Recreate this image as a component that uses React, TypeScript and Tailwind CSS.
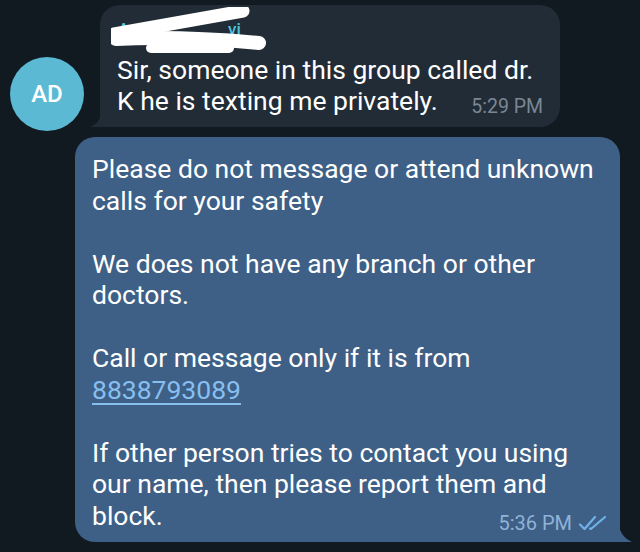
import React from "react";

const font = { fontFamily: "Roboto, 'Noto Sans', sans-serif" };

function DoubleCheck() {
  return (
    <svg width="30" height="18" viewBox="0 0 30 18" fill="none" stroke="#6fb2ea" strokeWidth="2.2" strokeLinecap="round" strokeLinejoin="round">
      <path d="M2 10.5 L6.5 15 L17 3" />
      <path d="M12 14.5 L13 15 L27 3" />
    </svg>
  );
}

export default function App() {
  return (
    <div className="relative h-[552px] w-[640px] overflow-hidden bg-[#111921] text-white" style={font}>
      <div className="flex items-end pl-[10px] pt-[5px]">
        <div className="mb-[-4px] flex h-[74px] w-[74px] items-center justify-center rounded-full bg-[#5bb9d3] text-[24px] font-medium text-white">
          AD
        </div>
        <div className="relative ml-[16px] w-[460px] rounded-[20px] rounded-bl-none bg-[#212c37] px-[17px] pb-[11px] pt-[8px]">
          <svg className="absolute bottom-0 left-[-10px]" width="12" height="14" viewBox="0 0 12 14">
            <path d="M12 0 L12 14 L0 14 C5 12 10 8 12 0 Z" fill="#212c37" />
          </svg>
          <div className="relative h-[30px] text-[17px] font-medium leading-[30px] text-[#4fc3d9]">
            <span className="absolute left-[1px] top-[1px]">A</span>
            <span className="absolute left-[111px] top-[1px]">vi</span>
            <svg className="absolute left-[-6px] top-[-6px]" width="170" height="52" viewBox="0 0 170 52" fill="none" stroke="#ffffff" strokeLinecap="round" strokeLinejoin="round">
              <path d="M3 27 L132 4" strokeWidth="13" />
              <path d="M5 32 Q70 29 148 36" strokeWidth="14" />
              <path d="M40 41 L118 41" strokeWidth="10" />
            </svg>
          </div>
          <div className="mt-[11px] text-[26.5px] leading-[31px]">Sir, someone in this group called dr.</div>
          <div className="flex items-end text-[26.5px] leading-[31px]">
            <span>K he is texting me privately.</span>
            <span className="ml-auto mb-[-2px] text-[19.5px] leading-[22px] text-[#7a8793]">5:29 PM</span>
          </div>
        </div>
      </div>

      <div className="ml-[75px] mt-[10px] w-[545px]">
        <div className="relative rounded-[20px] rounded-br-none bg-[#3e5f86] pb-[11px] pl-[17px] pr-[12px] pt-[16px] text-[26.5px] leading-[31.5px]">
          <svg className="absolute bottom-0 right-[-12px]" width="13" height="16" viewBox="0 0 13 16">
            <path d="M0 0 L0 16 L13 16 C7 13 2 9 0 0 Z" fill="#3e5f86" />
          </svg>
          <div className="whitespace-nowrap">Please do not message or attend unknown</div>
          <div>calls for your safety</div>
          <div className="h-[31.5px]" />
          <div>We does not have any branch or other</div>
          <div>doctors.</div>
          <div className="h-[31.5px]" />
          <div>Call or message only if it is from</div>
          <div>
            <span className="text-[#86bff0] underline decoration-[1.5px] underline-offset-[4px]">8838793089</span>
          </div>
          <div className="h-[31.5px]" />
          <div className="whitespace-nowrap">If other person tries to contact you using</div>
          <div>our name, then please report them and</div>
          <div className="flex items-end">
            <span>block.</span>
            <span className="ml-auto mb-[-3px] flex items-center gap-[6px] text-[20px] leading-[22px] text-[#8fb3d6]">
              5:36 PM
              <DoubleCheck />
            </span>
          </div>
        </div>
      </div>
    </div>
  );
}
